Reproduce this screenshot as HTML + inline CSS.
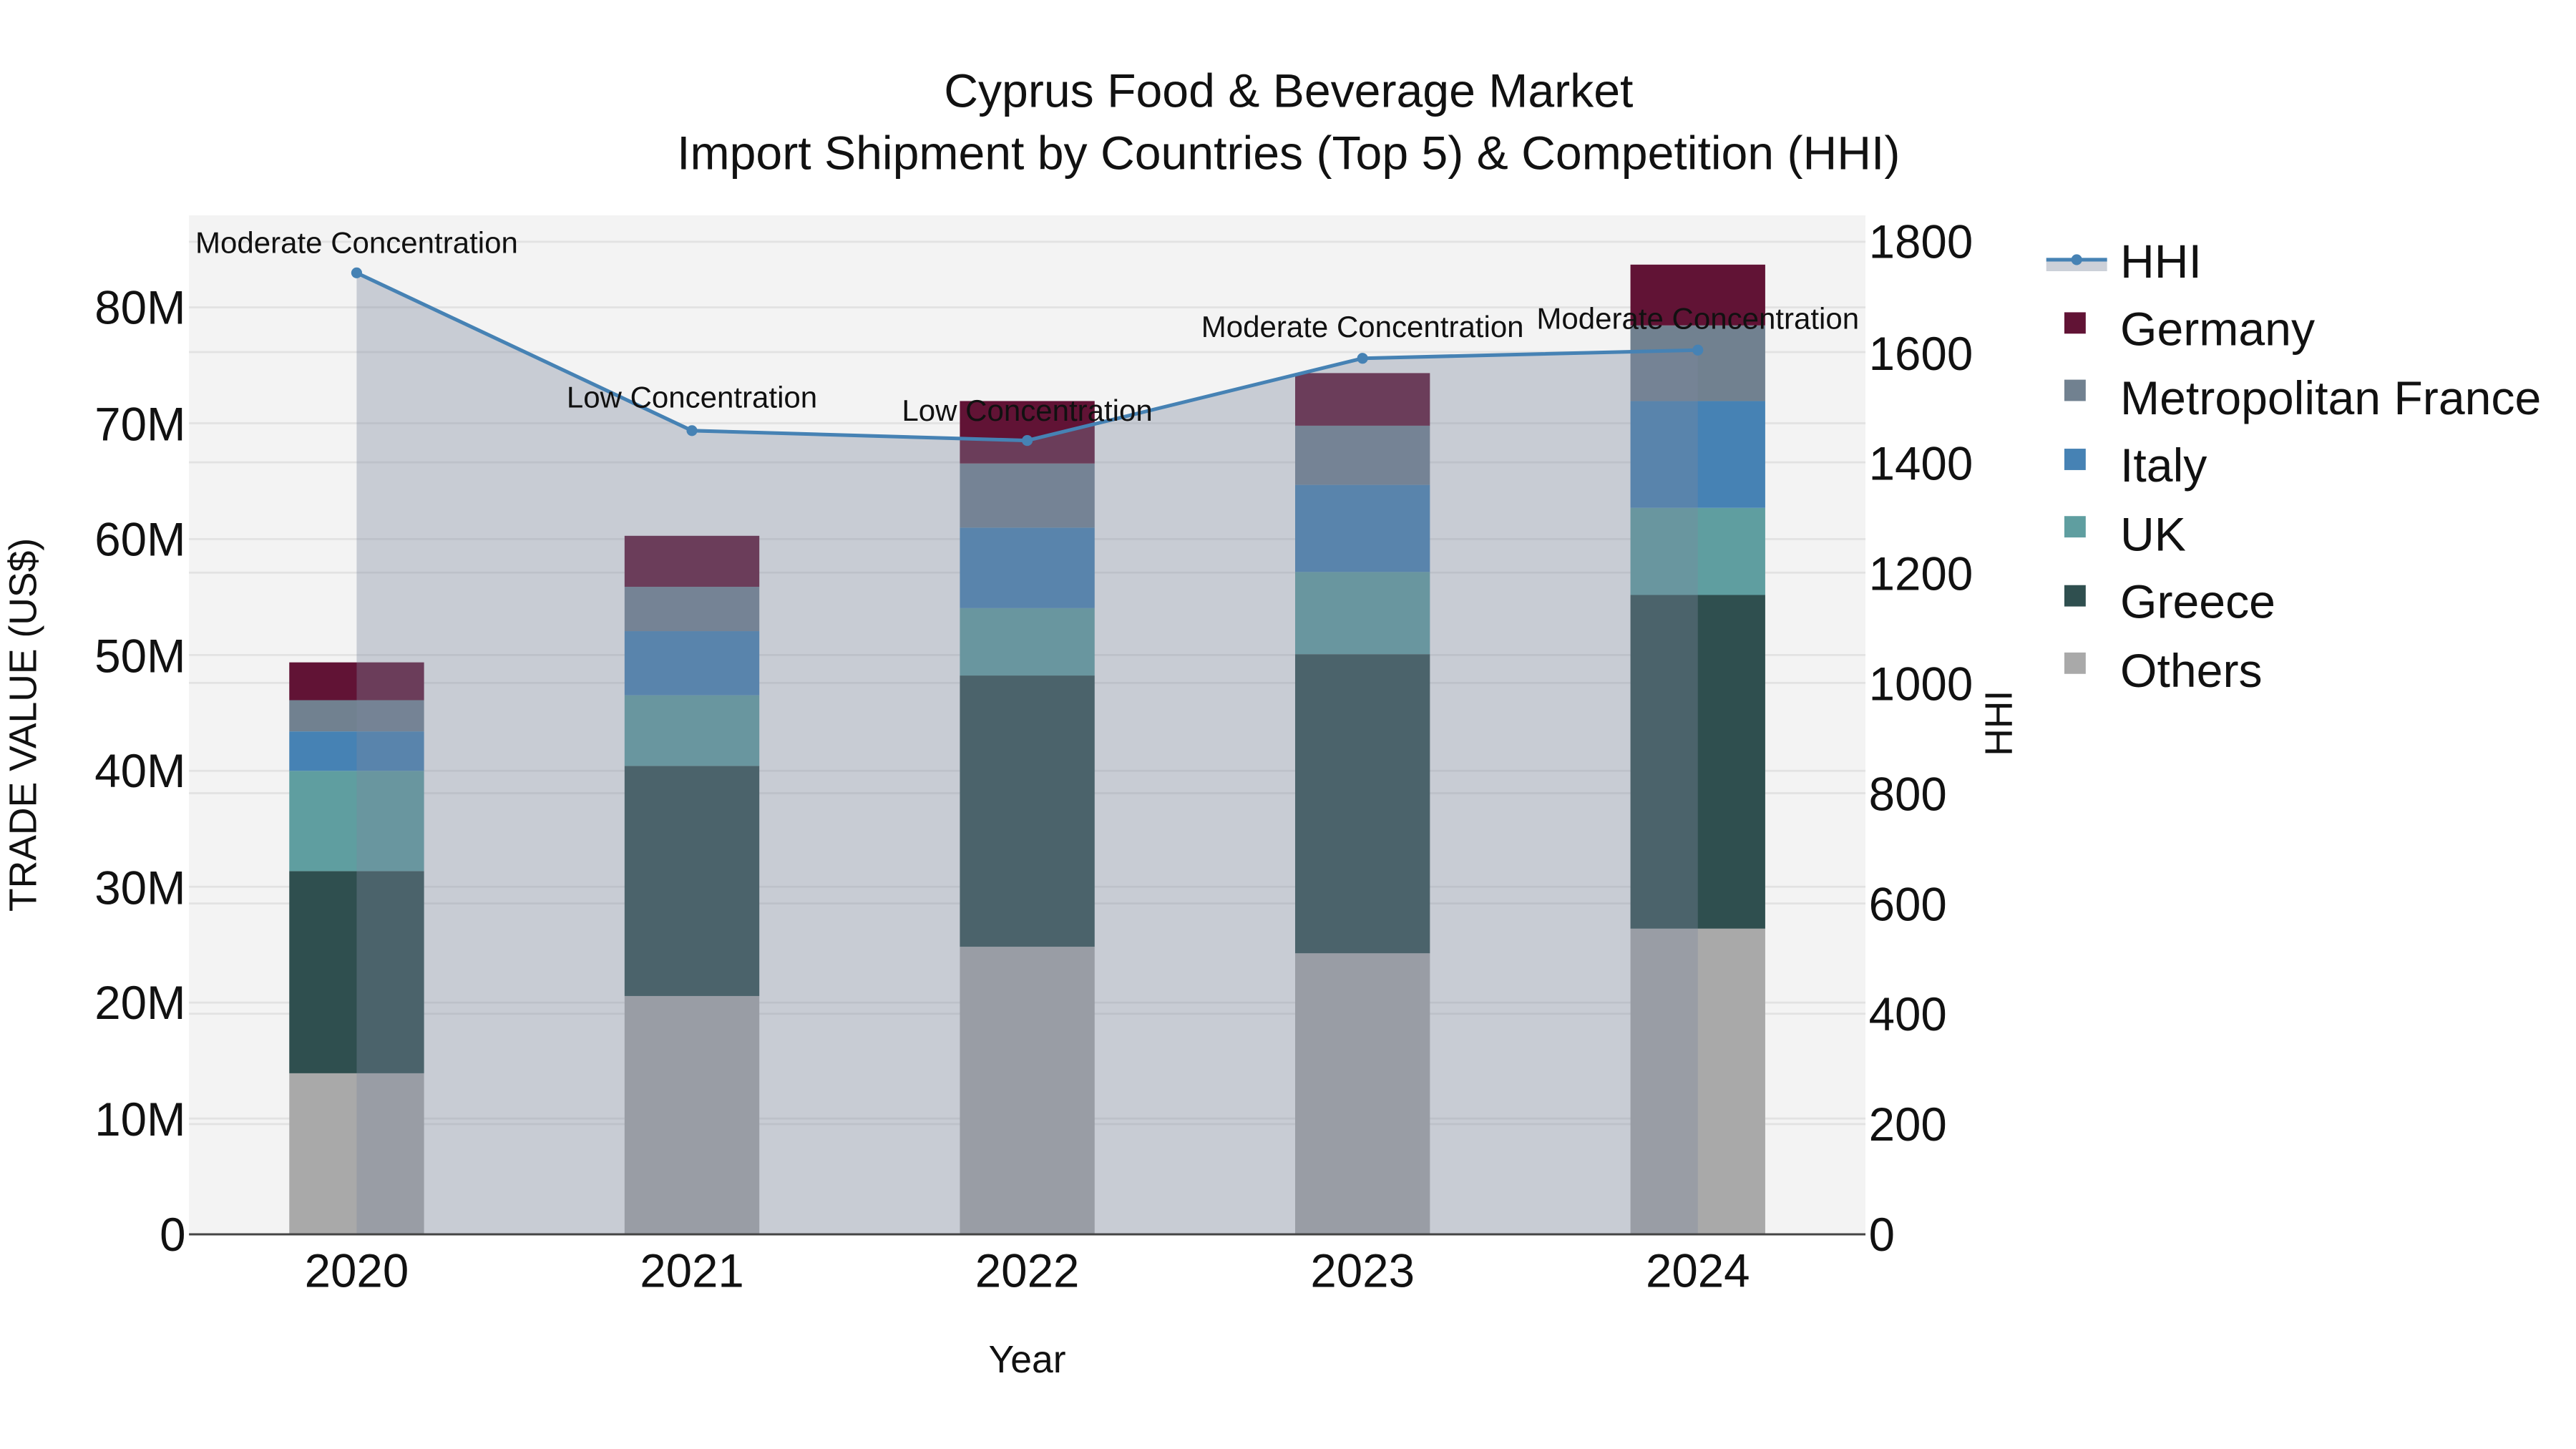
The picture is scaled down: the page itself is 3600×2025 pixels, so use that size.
<!DOCTYPE html>
<html><head><meta charset="utf-8"><style>html,body{margin:0;padding:0;background:#fff}svg{display:block}text{font-family:"Liberation Sans",sans-serif;fill:#111}</style></head><body>
<svg width="3600" height="2025" viewBox="0 0 1567.3 881.6" xmlns="http://www.w3.org/2000/svg">
<rect x="0" y="0" width="1567.3" height="881.6" fill="#fff"/>
<rect x="115" y="131" width="1020" height="620" fill="#f3f3f3"/>
<g stroke="#e2e2e2" stroke-width="1.2">
<line x1="115" x2="1135" y1="680.5" y2="680.5"/><line x1="115" x2="1135" y1="610" y2="610"/><line x1="115" x2="1135" y1="539.5" y2="539.5"/><line x1="115" x2="1135" y1="469" y2="469"/><line x1="115" x2="1135" y1="398.5" y2="398.5"/><line x1="115" x2="1135" y1="328" y2="328"/><line x1="115" x2="1135" y1="257.5" y2="257.5"/><line x1="115" x2="1135" y1="187" y2="187"/>
<line x1="115" x2="1135" y1="683.9" y2="683.9"/><line x1="115" x2="1135" y1="616.8" y2="616.8"/><line x1="115" x2="1135" y1="549.7" y2="549.7"/><line x1="115" x2="1135" y1="482.6" y2="482.6"/><line x1="115" x2="1135" y1="415.5" y2="415.5"/><line x1="115" x2="1135" y1="348.4" y2="348.4"/><line x1="115" x2="1135" y1="281.3" y2="281.3"/><line x1="115" x2="1135" y1="214.2" y2="214.2"/><line x1="115" x2="1135" y1="147.1" y2="147.1"/>
</g>
<g>
<rect x="176" y="653" width="82" height="98" fill="#a9a9a9"/><rect x="176" y="530" width="82" height="123" fill="#2f4f4f"/><rect x="176" y="469" width="82" height="61" fill="#5f9ea0"/><rect x="176" y="445" width="82" height="24" fill="#4682b4"/><rect x="176" y="426" width="82" height="19" fill="#718190"/><rect x="176" y="403" width="82" height="23" fill="#611335"/>
<rect x="380" y="606" width="82" height="145" fill="#a9a9a9"/><rect x="380" y="466" width="82" height="140" fill="#2f4f4f"/><rect x="380" y="423" width="82" height="43" fill="#5f9ea0"/><rect x="380" y="384" width="82" height="39" fill="#4682b4"/><rect x="380" y="357" width="82" height="27" fill="#718190"/><rect x="380" y="326" width="82" height="31" fill="#611335"/>
<rect x="584" y="576" width="82" height="175" fill="#a9a9a9"/><rect x="584" y="411" width="82" height="165" fill="#2f4f4f"/><rect x="584" y="370" width="82" height="41" fill="#5f9ea0"/><rect x="584" y="321" width="82" height="49" fill="#4682b4"/><rect x="584" y="282" width="82" height="39" fill="#718190"/><rect x="584" y="244" width="82" height="38" fill="#611335"/>
<rect x="788" y="580" width="82" height="171" fill="#a9a9a9"/><rect x="788" y="398" width="82" height="182" fill="#2f4f4f"/><rect x="788" y="348" width="82" height="50" fill="#5f9ea0"/><rect x="788" y="295" width="82" height="53" fill="#4682b4"/><rect x="788" y="259" width="82" height="36" fill="#718190"/><rect x="788" y="227" width="82" height="32" fill="#611335"/>
<rect x="992" y="565" width="82" height="186" fill="#a9a9a9"/><rect x="992" y="362" width="82" height="203" fill="#2f4f4f"/><rect x="992" y="309" width="82" height="53" fill="#5f9ea0"/><rect x="992" y="244" width="82" height="65" fill="#4682b4"/><rect x="992" y="198" width="82" height="46" fill="#718190"/><rect x="992" y="161" width="82" height="37" fill="#611335"/>
</g>
<polygon points="217,751 217,166 421,262 625,268 829,218 1033,213 1033,751" fill="rgba(124,135,157,0.36)"/>
<polyline points="217,166 421,262 625,268 829,218 1033,213" fill="none" stroke="#4682b4" stroke-width="2.2"/>
<g fill="#4682b4"><circle cx="217" cy="166" r="3.3"/><circle cx="421" cy="262" r="3.3"/><circle cx="625" cy="268" r="3.3"/><circle cx="829" cy="218" r="3.3"/><circle cx="1033" cy="213" r="3.3"/></g>
<line x1="115" x2="1135" y1="751" y2="751" stroke="#444" stroke-width="1.3"/>
<g font-size="18.3" text-anchor="middle">
<text x="217" y="154">Moderate Concentration</text>
<text x="421" y="248">Low Concentration</text>
<text x="625" y="256">Low Concentration</text>
<text x="829" y="205">Moderate Concentration</text>
<text x="1033" y="200">Moderate Concentration</text>
</g>
<g font-size="28.5" text-anchor="end">
<text x="113" y="761">0</text><text x="113" y="691">10M</text><text x="113" y="620">20M</text><text x="113" y="550">30M</text><text x="113" y="479">40M</text><text x="113" y="409">50M</text><text x="113" y="338">60M</text><text x="113" y="268">70M</text><text x="113" y="197">80M</text>
</g>
<g font-size="28.5">
<text x="1137" y="761">0</text><text x="1137" y="694">200</text><text x="1137" y="627">400</text><text x="1137" y="560">600</text><text x="1137" y="493">800</text><text x="1137" y="426">1000</text><text x="1137" y="359">1200</text><text x="1137" y="292">1400</text><text x="1137" y="225">1600</text><text x="1137" y="157">1800</text>
</g>
<g font-size="28.5" text-anchor="middle">
<text x="217" y="783">2020</text><text x="421" y="783">2021</text><text x="625" y="783">2022</text><text x="829" y="783">2023</text><text x="1033" y="783">2024</text>
</g>
<text x="625" y="835" font-size="23.3" text-anchor="middle">Year</text>
<text transform="translate(22,441) rotate(-90)" font-size="23.3" text-anchor="middle">TRADE VALUE (US$)</text>
<text transform="translate(1224,440) rotate(-90)" font-size="23.3" text-anchor="middle">HHI</text>
<g font-size="28.8" text-anchor="middle">
<text x="784" y="65">Cyprus Food &amp; Beverage Market</text>
<text x="784" y="103">Import Shipment by Countries (Top 5) &amp; Competition (HHI)</text>
</g>
<rect x="1245" y="159" width="37" height="6" fill="#ccd0d8"/>
<line x1="1245" x2="1282" y1="158" y2="158" stroke="#4682b4" stroke-width="2.2"/>
<circle cx="1263.5" cy="158" r="3.3" fill="#4682b4"/>
<g font-size="28.8">
<text x="1290" y="169">HHI</text>
<text x="1290" y="210">Germany</text>
<text x="1290" y="252">Metropolitan France</text>
<text x="1290" y="293">Italy</text>
<text x="1290" y="335">UK</text>
<text x="1290" y="376">Greece</text>
<text x="1290" y="418">Others</text>
</g>
<rect x="1256" y="190" width="13" height="13" fill="#611335"/>
<rect x="1256" y="231" width="13" height="13" fill="#718190"/>
<rect x="1256" y="273" width="13" height="13" fill="#4682b4"/>
<rect x="1256" y="314" width="13" height="13" fill="#5f9ea0"/>
<rect x="1256" y="356" width="13" height="13" fill="#2f4f4f"/>
<rect x="1256" y="397" width="13" height="13" fill="#a9a9a9"/>
</svg>
</body></html>
